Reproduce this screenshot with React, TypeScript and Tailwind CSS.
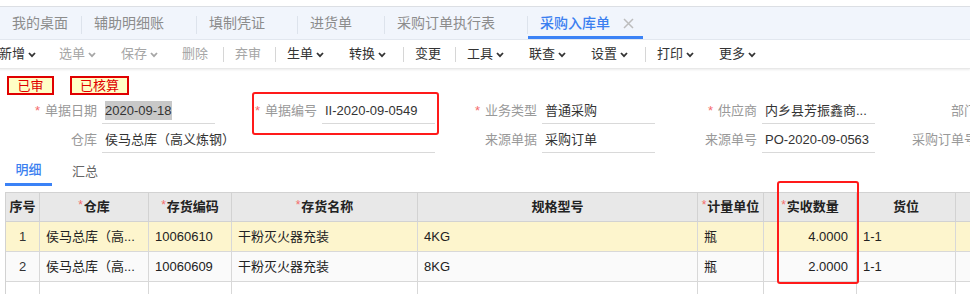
import React from 'react';

const font = { fontFamily: '"Liberation Sans", "Noto Sans CJK SC", sans-serif' };

function Chevron({ dim }: { dim?: boolean }) {
  return (
    <svg width="8" height="6" viewBox="0 0 8 6" className="ml-[3px] mt-[1px]">
      <polyline
        points="1,1 4,4.2 7,1"
        fill="none"
        stroke={dim ? '#a6a6a6' : '#333'}
        strokeWidth="1.8"
      />
    </svg>
  );
}

const tabs = [
  { label: '我的桌面', w: 'w-[82px]' },
  { label: '辅助明细账', w: 'w-[115px]' },
  { label: '填制凭证', w: 'w-[101px]' },
  { label: '进货单', w: 'w-[87px]' },
  { label: '采购订单执行表', w: 'w-[143px]' },
];

type Tool = { label: string; w: string; drop?: boolean; dim?: boolean; sep?: boolean };
const tools: Tool[] = [
  { label: '新增', w: 'w-[60px]', drop: true },
  { label: '选单', w: 'w-[62px]', drop: true, dim: true },
  { label: '保存', w: 'w-[61px]', drop: true, dim: true },
  { label: '删除', w: 'w-[41px]', dim: true, sep: true },
  { label: '弃审', w: 'w-[40px]', dim: true, sep: true },
  { label: '生单', w: 'w-[62px]', drop: true },
  { label: '转换', w: 'w-[54px]', drop: true, sep: true },
  { label: '变更', w: 'w-[40px]', sep: true },
  { label: '工具', w: 'w-[62px]', drop: true },
  { label: '联查', w: 'w-[62px]', drop: true },
  { label: '设置', w: 'w-[54px]', drop: true, sep: true },
  { label: '打印', w: 'w-[62px]', drop: true },
  { label: '更多', w: 'w-[62px]', drop: true },
];

function Field({
  label,
  value,
  req,
  wide,
  hl,
}: {
  label: string;
  value?: string;
  req?: boolean;
  wide?: boolean;
  hl?: boolean;
}) {
  return (
    <div className="flex items-center shrink-0">
      <div className="w-[100px] pr-[5px] text-right text-[13px] text-[#999] whitespace-nowrap">
        {req && <span className="text-[#f56c6c] mr-[5px]">*</span>}
        {label}
      </div>
      <div
        className={`${wide ? 'w-[333px]' : 'w-[113px]'} h-[26px] border-b border-[#d9d9d9] pl-[3px] flex items-center text-[13px] text-[#333] whitespace-nowrap overflow-hidden`}
      >
        <span className={hl ? 'bg-[#c8c8c8]' : ''}>{value}</span>
      </div>
    </div>
  );
}

const cols = [
  { t: '序号', w: 'w-[34px]' },
  { t: '仓库', w: 'w-[109px]', r: true },
  { t: '存货编码', w: 'w-[83px]', r: true },
  { t: '存货名称', w: 'w-[186px]', r: true },
  { t: '规格型号', w: 'w-[280px]' },
  { t: '计量单位', w: 'w-[66px]', r: true },
  { t: '实收数量', w: 'w-[93px]', r: true },
  { t: '货位', w: 'w-[99px]' },
  { t: '', w: 'w-[40px]' },
];

const rows = [
  ['1', '侯马总库（高...', '10060610', '干粉灭火器充装', '4KG', '瓶', '4.0000', '1-1', ''],
  ['2', '侯马总库（高...', '10060609', '干粉灭火器充装', '8KG', '瓶', '2.0000', '1-1', ''],
  ['', '', '', '', '', '', '', '', ''],
];

export default function App() {
  return (
    <div className="relative w-[970px] h-[294px] overflow-hidden bg-white" style={font}>
      {/* tab strip */}
      <div className="h-[6px] bg-white" />
      <div className="h-[34px] bg-[#f1f5fc] border-t border-[#dcdfe4] border-b border-b-[#e3e8f0] flex items-stretch">
        {tabs.map((t) => (
          <div key={t.label} className={`${t.w} flex items-center relative pl-[12px] text-[14px] text-[#8c8c8c] shrink-0`}>
            {t.label}
            <span className="absolute right-0 top-[9px] w-px h-[18px] bg-[#dde3ec]" />
          </div>
        ))}
        <div className="w-[115px] flex items-center relative pl-[12px] text-[14px] text-[#3b7ff0] font-medium shrink-0">
          采购入库单
          <svg width="11" height="11" viewBox="0 0 11 11" className="ml-[13px]">
            <path d="M1 1 L10 10 M10 1 L1 10" stroke="#bdbdbd" strokeWidth="1.5" />
          </svg>
          <span className="absolute left-0 right-0 bottom-[0px] h-[3px] bg-[#3b82f6]" />
        </div>
      </div>

      {/* toolbar */}
      <div className="h-[29px] flex items-center -ml-[1px] border-b border-[#e8e8e8] shadow-[0_1px_2px_rgba(0,0,0,0.08)]">
        {tools.map((t) => (
          <React.Fragment key={t.label}>
            <div className={`${t.w} shrink-0 flex items-center text-[13px] ${t.dim ? 'text-[#a6a6a6]' : 'text-[#333]'}`}>
              {t.label}
              {t.drop && <Chevron dim={t.dim} />}
            </div>
            {t.sep && <span className="w-px h-[15px] bg-[#d6d6d6] mr-[11px] shrink-0" />}
          </React.Fragment>
        ))}
      </div>

      {/* status stamps */}
      <div className="flex gap-[16px] pl-[7px] pt-[7px]">
        <div className="w-[47px] h-[19px] border-2 border-[#e00000] bg-[#ffffc6] text-[#e00000] text-[13px] flex items-center justify-center leading-none">已审</div>
        <div className="w-[59px] h-[19px] border-2 border-[#e00000] bg-[#ffffc6] text-[#e00000] text-[13px] flex items-center justify-center leading-none">已核算</div>
      </div>

      {/* form */}
      <div className="pl-[2px] mt-[3px] flex flex-col gap-[3px]">
        <div className="flex gap-[7px]">
          <Field label="单据日期" value="2020-09-18" req hl />
          <Field label="单据编号" value="II-2020-09-0549" req />
          <Field label="业务类型" value="普通采购" req />
          <Field label="供应商" value="内乡县芳振鑫商..." req />
          <Field label="部门" />
        </div>
        <div className="flex gap-[7px]">
          <Field label="仓库" value="侯马总库（高义炼钢）" wide />
          <Field label="来源单据" value="采购订单" />
          <Field label="来源单号" value="PO-2020-09-0563" />
          <Field label="采购订单号" />
        </div>
      </div>

      {/* detail tabs */}
      <div className="flex pl-[5px] mt-[4px] text-[13px]">
        <div className="w-[47px] h-[29px] flex items-center justify-center text-[#3b7ff0] font-medium border-b-[3px] border-[#3b82f6]">明细</div>
        <div className="ml-[20px] h-[29px] flex items-center text-[#666]">汇总</div>
      </div>

      {/* grid */}
      <div className="ml-[5px] mt-[6px] border-l border-t border-[#d2d2d2] text-[13px]">
        <div className="flex h-[29px] bg-[#e8e8e8] border-b border-[#d2d2d2]">
          {cols.map((c, i) => (
            <div key={i} className={`${c.w} shrink-0 border-r border-[#d2d2d2] flex items-center justify-center font-bold text-[#222]`}>
              {c.r && <span className="text-[#f56c6c] font-normal mr-[1px] -mt-[4px] text-[12px]">*</span>}
              {c.t}
            </div>
          ))}
        </div>
        {rows.map((r, ri) => (
          <div key={ri} className={`flex h-[30px] border-b border-[#d8d8d8] ${ri === 0 ? 'bg-[#fdf5cd]' : ri === 1 ? 'bg-[#fafafa]' : 'bg-white'}`}>
            {r.map((v, ci) => (
              <div
                key={ci}
                className={`${cols[ci].w} shrink-0 border-r border-[#d8d8d8] flex items-center text-[#222] whitespace-nowrap overflow-hidden ${
                  ci === 0 ? 'justify-center text-[#333]' : ci === 6 ? 'justify-end pr-[8px]' : 'pl-[6px]'
                }`}
              >
                {v}
              </div>
            ))}
          </div>
        ))}
      </div>

      {/* annotation boxes */}
      <div className="absolute left-[252px] top-[92px] w-[187px] h-[43px] border-2 border-[#ff1a1a] rounded-[3px]" />
      <div className="absolute left-[777px] top-[181px] w-[82px] h-[103px] border-2 border-[#ff1a1a] rounded-[3px]" />
    </div>
  );
}
